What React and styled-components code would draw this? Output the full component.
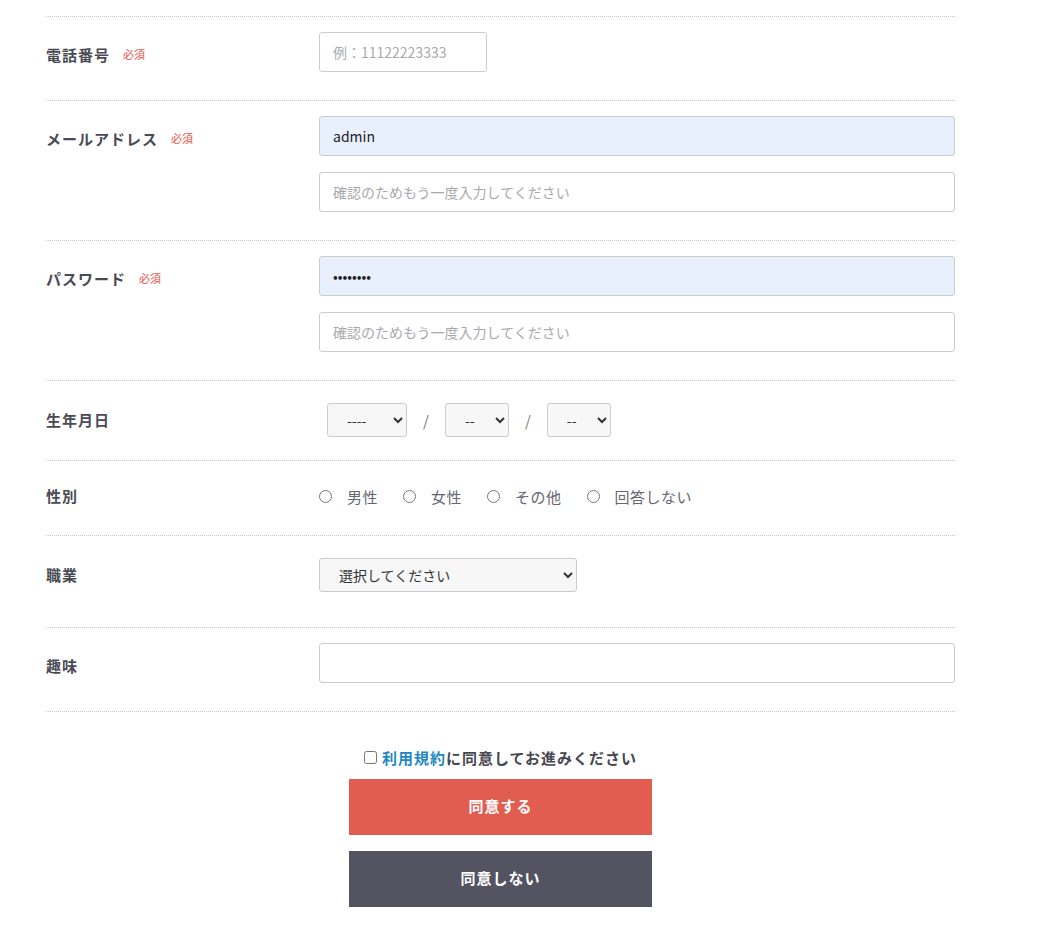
import React from "react";
import styled, { createGlobalStyle } from "styled-components";

const GlobalStyle = createGlobalStyle`
  html, body { margin: 0; padding: 0; background: #fff; }
  body { font-family: "Noto Sans CJK JP", "Noto Sans", sans-serif; color: #474750; }
  * { box-sizing: border-box; }
`;

const FONT = `"Noto Sans CJK JP", "Noto Sans", sans-serif`;

const Page = styled.div`
  padding: 16px 0 32px 46px;
`;

const Form = styled.form`
  width: 909px;
`;

const Row = styled.div`
  display: grid;
  grid-template-columns: 273px 636px;
  align-items: ${(p) => (p.$center ? "center" : "start")};
  padding: ${(p) => p.$pad || "15px 0 28px"};
  border-top: 1px dotted #c8c8c8;
  &:last-of-type {
    border-bottom: 1px dotted #c8c8c8;
  }
`;

const Label = styled.div`
  display: flex;
  align-items: center;
  min-height: ${(p) => (p.$center ? "auto" : "40px")};
  padding-top: ${(p) => (p.$center ? "0" : "4px")};
  margin-top: ${(p) => (p.$center ? "-2px" : "0")};
  font-size: 15px;
  font-weight: 700;
  letter-spacing: 1px;
  color: #4a4a54;
`;

const Required = styled.span`
  margin-left: 13px;
  font-size: 11px;
  font-weight: 400;
  letter-spacing: 0;
  color: #e9524a;
`;

const Fields = styled.div`
  display: flex;
  flex-direction: column;
  gap: 16px;
`;

const TextInput = styled.input`
  display: block;
  width: ${(p) => p.$width || "100%"};
  height: 40px;
  padding: 0 13px;
  border: 1px solid #cccccc;
  border-radius: 3px;
  background: ${(p) => (p.$filled ? "#e8f0fe" : "#fff")};
  font-family: ${FONT};
  font-size: 14px;
  color: #222;
  outline: none;
  &::placeholder {
    color: #a9a9ad;
  }
`;

const DateGroup = styled.div`
  display: flex;
  align-items: center;
  padding-left: 8px;
`;

const Select = styled.select`
  width: ${(p) => p.$width}px;
  height: 34px;
  padding: 0 6px 0 15px;
  border: 1px solid #cccccc;
  border-radius: 3px;
  background-color: #f7f7f7;
  font-family: ${FONT};
  font-size: 14px;
  color: #333;
`;

const Slash = styled.span`
  margin: 0 16px;
  font-size: 15px;
  color: #777;
`;

const RadioGroup = styled.div`
  display: flex;
  align-items: center;
  gap: 25px;
  height: 22px;
`;

const RadioLabel = styled.label`
  display: flex;
  align-items: center;
  gap: 15px;
  font-size: 15px;
  letter-spacing: 0.5px;
  color: #666670;
`;

const Radio = styled.input`
  margin: 0;
  width: 13px;
  height: 13px;
`;

const Agree = styled.div`
  display: flex;
  flex-direction: column;
  align-items: center;
  width: 909px;
  padding-top: 33px;
`;

const CheckLine = styled.label`
  display: flex;
  align-items: center;
  gap: 5px;
  height: 24px;
  font-size: 15px;
  font-weight: 700;
  letter-spacing: 1px;
  color: #474750;
`;

const Check = styled.input`
  margin: 0;
  width: 13px;
  height: 13px;
`;

const TermsLink = styled.a`
  color: #1f8ac0;
  text-decoration: none;
`;

const Button = styled.button`
  width: 303px;
  height: 56px;
  margin-top: ${(p) => p.$mt}px;
  padding: 0 0 4px;
  border: none;
  border-radius: 0;
  background: ${(p) => p.$bg};
  color: #fff;
  font-family: ${FONT};
  font-size: 15px;
  font-weight: 700;
  letter-spacing: 1px;
`;

export default function App() {
  return (
    <>
      <GlobalStyle />
      <Page>
        <Form onSubmit={(e) => e.preventDefault()}>
          <Row>
            <Label>
              電話番号<Required>必須</Required>
            </Label>
            <Fields>
              <TextInput $width="168px" placeholder="例：11122223333" />
            </Fields>
          </Row>
          <Row>
            <Label>
              メールアドレス<Required>必須</Required>
            </Label>
            <Fields>
              <TextInput $filled defaultValue="admin" />
              <TextInput placeholder="確認のためもう一度入力してください" />
            </Fields>
          </Row>
          <Row>
            <Label>
              パスワード<Required>必須</Required>
            </Label>
            <Fields>
              <TextInput $filled type="password" defaultValue="password" />
              <TextInput placeholder="確認のためもう一度入力してください" />
            </Fields>
          </Row>
          <Row $center $pad="22px 0 23px">
            <Label $center>生年月日</Label>
            <DateGroup>
              <Select $width={80} defaultValue="">
                <option value="">----</option>
              </Select>
              <Slash>/</Slash>
              <Select $width={64} defaultValue="">
                <option value="">--</option>
              </Select>
              <Slash>/</Slash>
              <Select $width={64} defaultValue="">
                <option value="">--</option>
              </Select>
            </DateGroup>
          </Row>
          <Row $center $pad="24px 0 28px">
            <Label $center>性別</Label>
            <RadioGroup>
              {["男性", "女性", "その他", "回答しない"].map((g) => (
                <RadioLabel key={g}>
                  <Radio type="radio" name="gender" />
                  {g}
                </RadioLabel>
              ))}
            </RadioGroup>
          </Row>
          <Row $center $pad="22px 0 35px">
            <Label $center>職業</Label>
            <div>
              <Select $width={258} defaultValue="">
                <option value="">選択してください</option>
              </Select>
            </div>
          </Row>
          <Row>
            <Label>趣味</Label>
            <Fields>
              <TextInput />
            </Fields>
          </Row>
        </Form>
        <Agree>
          <CheckLine>
            <Check type="checkbox" />
            <span>
              <TermsLink href="#">利用規約</TermsLink>に同意してお進みください
            </span>
          </CheckLine>
          <Button $bg="#e05d50" $mt={10}>同意する</Button>
          <Button $bg="#535362" $mt={16}>同意しない</Button>
        </Agree>
      </Page>
    </>
  );
}
